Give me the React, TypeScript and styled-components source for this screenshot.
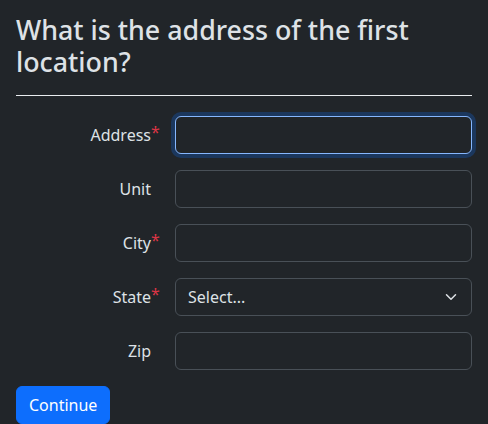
import React from "react";
import styled, { createGlobalStyle } from "styled-components";

const Global = createGlobalStyle`
  html, body { margin: 0; padding: 0; background: #212529; }
  body { font-family: "Noto Sans", "Open Sans", sans-serif; color: #dee2e6; }
  * { box-sizing: border-box; }
`;

const Page = styled.div`
  padding: 14px 16px 0;
  background: #212529;
  min-height: 424px;
`;

const Title = styled.h2`
  margin: 0 0 8px;
  font-size: 26.8px;
  font-weight: 500;
  line-height: 1.2;
  color: #dee2e6;
`;

const Rule = styled.hr`
  margin: 17px 0 20px;
  border: 0;
  border-top: 1px solid #e9ecef;
`;

const Form = styled.form`
  display: flex;
  flex-direction: column;
`;

const Row = styled.div`
  display: grid;
  grid-template-columns: 147px 1fr;
  column-gap: 12px;
  align-items: center;
  margin-bottom: 16px;
`;

const Label = styled.label`
  justify-self: end;
  padding-right: 12px;
  font-size: 16px;
  line-height: 1.5;
  color: #dee2e6;
`;

const LabelText = styled.span`
  position: relative;
`;

const Star = styled.span`
  position: absolute;
  left: 100%;
  top: 0;
  line-height: 1;
  color: #dc3545;
  font-size: 16px;
`;

const Input = styled.input<{ $focus?: boolean }>`
  display: block;
  width: 100%;
  height: 38px;
  padding: 6px 12px;
  font: inherit;
  font-size: 16px;
  color: #dee2e6;
  background: #212529;
  border: 1px solid ${(p) => (p.$focus ? "#86b7fe" : "#495057")};
  border-radius: 6px;
  outline: none;
  box-shadow: ${(p) => (p.$focus ? "0 0 0 4px rgba(13,110,253,0.25)" : "none")};
`;

const SelectBox = styled.div`
  display: flex;
  align-items: center;
  justify-content: space-between;
  height: 38px;
  padding: 0 14px 0 12px;
  font-size: 16px;
  color: #dee2e6;
  background: #212529;
  border: 1px solid #495057;
  border-radius: 6px;
`;

const Button = styled.button`
  align-self: flex-start;
  height: 38px;
  padding: 6px 12px;
  font: inherit;
  font-size: 16px;
  color: #fff;
  background: #0d6efd;
  border: 1px solid #0d6efd;
  border-radius: 6px;
`;

const Chevron = () => (
  <svg width="12" height="12" viewBox="0 0 16 16" fill="none">
    <path d="m2 5 6 6 6-6" stroke="#dee2e6" strokeWidth="2" strokeLinecap="round" strokeLinejoin="round" />
  </svg>
);

const Field = ({ label, required, children }: { label: string; required?: boolean; children: React.ReactNode }) => (
  <Row>
    <Label>
      <LabelText>
        {label}
        {required && <Star>*</Star>}
      </LabelText>
    </Label>
    {children}
  </Row>
);

export default function App() {
  return (
    <Page>
      <Global />
      <Title>What is the address of the first location?</Title>
      <Rule />
      <Form>
        <Field label="Address" required>
          <Input $focus />
        </Field>
        <Field label="Unit">
          <Input />
        </Field>
        <Field label="City" required>
          <Input />
        </Field>
        <Field label="State" required>
          <SelectBox>
            <span>Select...</span>
            <Chevron />
          </SelectBox>
        </Field>
        <Field label="Zip">
          <Input />
        </Field>
        <Button type="button">Continue</Button>
      </Form>
    </Page>
  );
}
